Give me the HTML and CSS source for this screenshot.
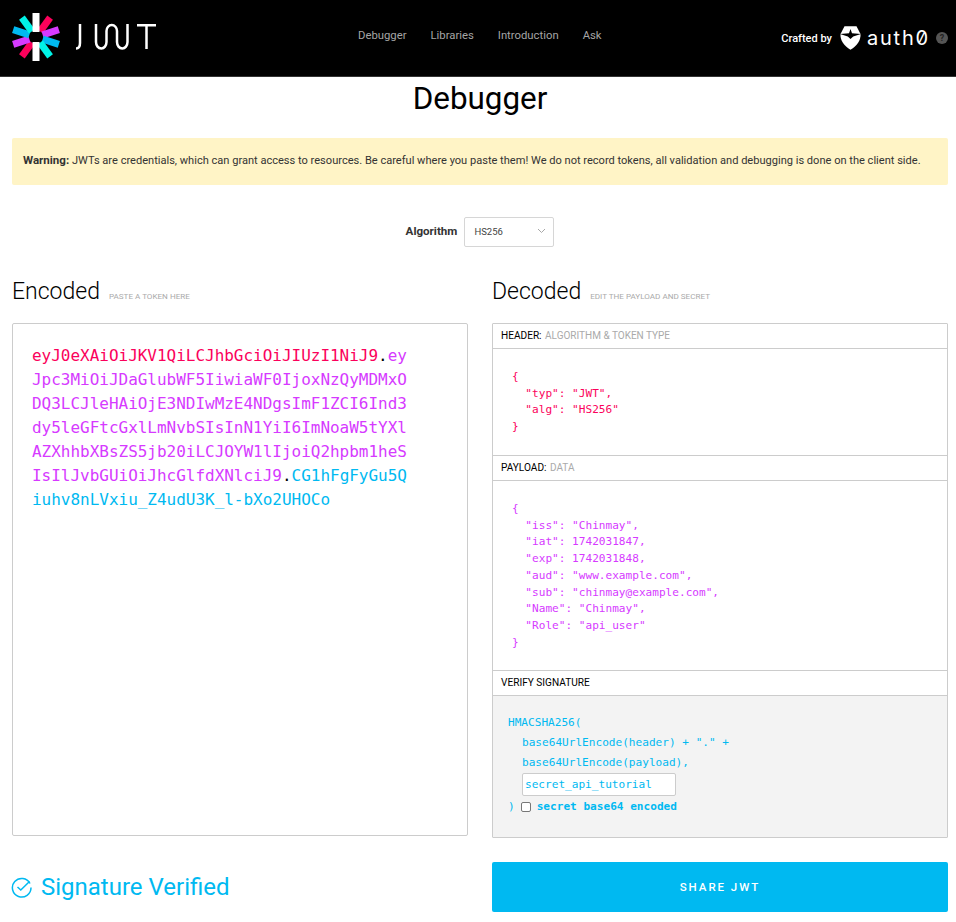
FILE: index.html
```html
<!DOCTYPE html>
<html lang="en">
<head>
<meta charset="utf-8">
<title>JWT Debugger</title>
<link rel="stylesheet" href="styles.css">
</head>
<body>
<header class="topbar">
  <a class="logo" aria-label="JWT">
    <svg width="146" height="50" viewBox="0 0 146 50">
      <g transform="translate(24 24)">
        <g fill="#fb015b"><rect x="-3.500" y="-24" width="7" height="17" transform="rotate(36)"/><rect x="-3.500" y="-24" width="7" height="17" transform="rotate(216)"/></g>
        <g fill="#d63aff"><rect x="-3.500" y="-24" width="7" height="17" transform="rotate(72)"/><rect x="-3.500" y="-24" width="7" height="17" transform="rotate(252)"/></g>
        <g fill="#00b9f1"><rect x="-3.500" y="-24" width="7" height="17" transform="rotate(108)"/><rect x="-3.500" y="-24" width="7" height="17" transform="rotate(288)"/></g>
        <g fill="#00f2e6"><rect x="-3.500" y="-24" width="7" height="17" transform="rotate(144)"/><rect x="-3.500" y="-24" width="7" height="17" transform="rotate(324)"/></g>
        <g fill="#fff"><rect x="-3.500" y="-24" width="7" height="19"/><rect x="-3.500" y="-24" width="7" height="19" transform="rotate(180)"/></g>
      </g>
      <g fill="none" stroke="#fff" stroke-width="2.500">
        <path d="M68 11V30Q68 35.500 64 35.500"/>
        <path d="M84 11V29A5.250 6.500 0 0 0 94.500 29V18A5.250 6 0 0 1 105 18V29A5.250 6.500 0 0 0 115.500 29V11"/>
        <path d="M125 12.200H144M134.500 12.200V36"/>
      </g>
    </svg>
  </a>
  <nav class="nav">
    <a>Debugger</a>
    <a>Libraries</a>
    <a>Introduction</a>
    <a>Ask</a>
  </nav>
  <div class="crafted">
    <span class="crafted-label">Crafted by</span>
    <svg class="shield" width="21" height="24" viewBox="0 0 21 24">
      <path fill="#fff" d="M4.500 0.300H16.500L20.500 8C21 14 17 20 10.500 23.700C4 20 0 14 0.500 8Z"/>
      <path fill="#000" d="M10.500 3 12 7.300 21 8 13.200 10.500 10.500 13 7.800 10.500 0 8 9 7.300Z"/>
    </svg>
    <span class="auth0">auth0</span>
    <span class="help">?</span>
  </div>
</header>

<main class="page">
  <h1 class="title">Debugger</h1>
  <p class="warning"><strong>Warning:</strong> JWTs are credentials, which can grant access to resources. Be careful where you paste them! We do not record tokens, all validation and debugging is done on the client side.</p>

  <div class="algorithm">
    <span class="algorithm-label">Algorithm</span>
    <div class="select">
      <span>HS256</span>
      <svg width="9" height="6" viewBox="0 0 9 6"><path d="M1 1 4.500 4.500 8 1" fill="none" stroke="#a8a8a8" stroke-width="1"/></svg>
    </div>
  </div>

  <div class="columns">
    <section class="column">
      <div class="heading"><h2>Encoded</h2><span>PASTE A TOKEN HERE</span></div>
      <div class="encoded"><span class="red">eyJ0eXAiOiJKV1QiLCJhbGciOiJIUzI1NiJ9</span>.<span class="purple">eyJpc3MiOiJDaGlubWF5IiwiaWF0IjoxNzQyMDMxODQ3LCJleHAiOjE3NDIwMzE4NDgsImF1ZCI6Ind3dy5leGFtcGxlLmNvbSIsInN1YiI6ImNoaW5tYXlAZXhhbXBsZS5jb20iLCJOYW1lIjoiQ2hpbm1heSIsIlJvbGUiOiJhcGlfdXNlciJ9</span>.<span class="blue">CG1hFgFyGu5Qiuhv8nLVxiu_Z4udU3K_l-bXo2UHOCo</span></div>
    </section>

    <section class="column">
      <div class="heading"><h2>Decoded</h2><span>EDIT THE PAYLOAD AND SECRET</span></div>
      <div class="decoded">
        <div class="panel-head"><b>HEADER:</b> <span>ALGORITHM &amp; TOKEN TYPE</span></div>
        <pre class="code code-header red">{
  "typ": "JWT",
  "alg": "HS256"
}</pre>
        <div class="panel-head"><b>PAYLOAD:</b> <span>DATA</span></div>
        <pre class="code code-payload purple">{
  "iss": "Chinmay",
  "iat": 1742031847,
  "exp": 1742031848,
  "aud": "www.example.com",
  "sub": "chinmay@example.com",
  "Name": "Chinmay",
  "Role": "api_user"
}</pre>
        <div class="panel-head"><b>VERIFY SIGNATURE</b></div>
        <div class="verify">
          <div class="verify-line">HMACSHA256(</div>
          <div class="verify-line indent">base64UrlEncode(header) + "." +</div>
          <div class="verify-line indent">base64UrlEncode(payload),</div>
          <div class="indent"><input class="secret" type="text" value="secret_api_tutorial"></div>
          <label class="secret-row">) <input class="check" type="checkbox"> <b>secret base64 encoded</b></label>
        </div>
      </div>
    </section>
  </div>

  <div class="columns footer">
    <div class="verified">
      <svg width="21" height="21" viewBox="0 0 21 21" fill="none" stroke="#00b9f1" stroke-width="1.500">
        <path d="M19 6.500A9.300 9.300 0 1 0 20 10.500"/>
        <path d="M6.500 10 9.800 13 18.500 4.500"/>
      </svg>
      <span>Signature Verified</span>
    </div>
    <button class="share">SHARE JWT</button>
  </div>
</main>
</body>
</html>
```

FILE: styles.css
```css
* { box-sizing: border-box; }
html, body { margin: 0; padding: 0; }
body { background: #fff; color: #000; font-family: Roboto, "Liberation Sans", sans-serif; }

.topbar {
  height: 77px;
  background: #000;
  border-bottom: 1px solid #333;
  display: flex;
  align-items: flex-start;
}
.logo { display: block; margin: 13px 0 0 12px; width: 346px; }
.nav { display: flex; gap: 24px; padding-top: 29px; font-size: 11.300px; color: #a5a5a5; line-height: 13px; }
.crafted { margin-left: auto; display: flex; align-items: center; padding: 25px 8px 0 0; color: #fff; }
.crafted-label { font-size: 11px; font-weight: 500; margin-right: 8px; }
.shield { margin-right: 6px; }
.auth0 { font-family: Inter, sans-serif; font-size: 20px; font-variant-numeric: slashed-zero; letter-spacing: 1.800px; line-height: 26px; margin-right: 6px; }
.help { width: 12px; height: 12px; border-radius: 50%; background: #555; color: #222; font-size: 9px; font-weight: 700; text-align: center; line-height: 12px; }

.page { padding: 0 8px 0 12px; }
.title { margin: 0; padding-top: 1px; text-align: center; font-size: 31.400px; line-height: 42px; font-weight: 400; }
.warning {
  margin: 18px 0 0;
  height: 47px;
  background: #fff4c6;
  border-radius: 2px;
  padding: 0 11px;
  font-size: 11.070px;
  line-height: 45px;
  color: #333;
  white-space: nowrap;
}
.warning strong { font-size: 11.560px; font-weight: 700; }

.algorithm { display: flex; justify-content: center; align-items: center; gap: 7px; margin-top: 32px; }
.algorithm-label { font-size: 11.600px; font-weight: 700; color: #333; padding-bottom: 2px; }
.select {
  width: 90px; height: 30px;
  border: 1px solid #d6d6d6; border-radius: 2px;
  display: flex; align-items: center; justify-content: space-between;
  padding: 0 7px 2px 9px;
  font-size: 9.500px; color: #444;
}

.columns { display: flex; gap: 24px; }
.column { width: 456px; }
.heading { display: flex; align-items: baseline; gap: 9px; margin-top: 24px; height: 52px; }
.heading h2 { margin: 0; font-size: 23px; line-height: 42px; font-weight: 300; }
.heading span { font-size: 8.100px; color: #aaa; }

.encoded {
  height: 513px;
  border: 1px solid #ccc;
  border-radius: 2px;
  padding: 20px 58px 19px 19px;
  font-family: "DejaVu Sans Mono", monospace;
  font-size: 16px;
  letter-spacing: -0.020px;
  line-height: 24px;
  word-break: break-all;
  color: #000;
}
.red { color: #fb015b; }
.purple { color: #d63aff; }
.blue { color: #00b9f1; }

.decoded { height: 515px; border: 1px solid #ccc; border-radius: 1px; display: flex; flex-direction: column; }
.panel-head { height: 25px; flex: none; border-bottom: 1px solid #ccc; font-size: 10.100px; line-height: 24px; padding-left: 8px; color: #000; white-space: pre; }
.panel-head b { font-weight: 400; }
.panel-head span { color: #aaa; font-size: 10px; margin-left: 1px; }
.code { margin: 0; flex: none; font-family: "DejaVu Sans Mono", monospace; font-size: 11.100px; line-height: 16.700px; padding: 20px 0 0 19px; border-bottom: 1px solid #ccc; }
.code-header { height: 107px; }
.code-payload { height: 190px; }
.verify { flex: 1; background: #f3f3f3; padding: 17px 0 0 15px; font-family: "DejaVu Sans Mono", monospace; font-size: 11.100px; color: #00b9f1; }
.verify-line { line-height: 20px; }
.indent { padding-left: 14px; }
.secret {
  display: block; width: 154px; height: 23px; border: 1px solid #ccc; border-radius: 2px;
  background: #fff; padding: 0 2px; font: 11.100px "DejaVu Sans Mono", monospace; color: #00b9f1;
}
.secret-row { display: flex; align-items: center; gap: 6px; line-height: 20px; padding-top: 1px; }
.secret-row b { font-weight: 700; }
.check { margin: 0; width: 10px; height: 10px; appearance: none; background: #fff; border: 1px solid #777; border-radius: 2px; }

.footer { margin-top: 24px; }
.verified { width: 456px; height: 50px; display: flex; align-items: center; gap: 9px; color: #00b9f1; font-size: 24px; }
.verified svg { margin-left: -1px; }
.share {
  width: 456px; height: 50px; border: 0; border-radius: 2px;
  background: #00b9f1; color: #fff; font: 500 11.500px Roboto, sans-serif; letter-spacing: 1.950px;
}
```
